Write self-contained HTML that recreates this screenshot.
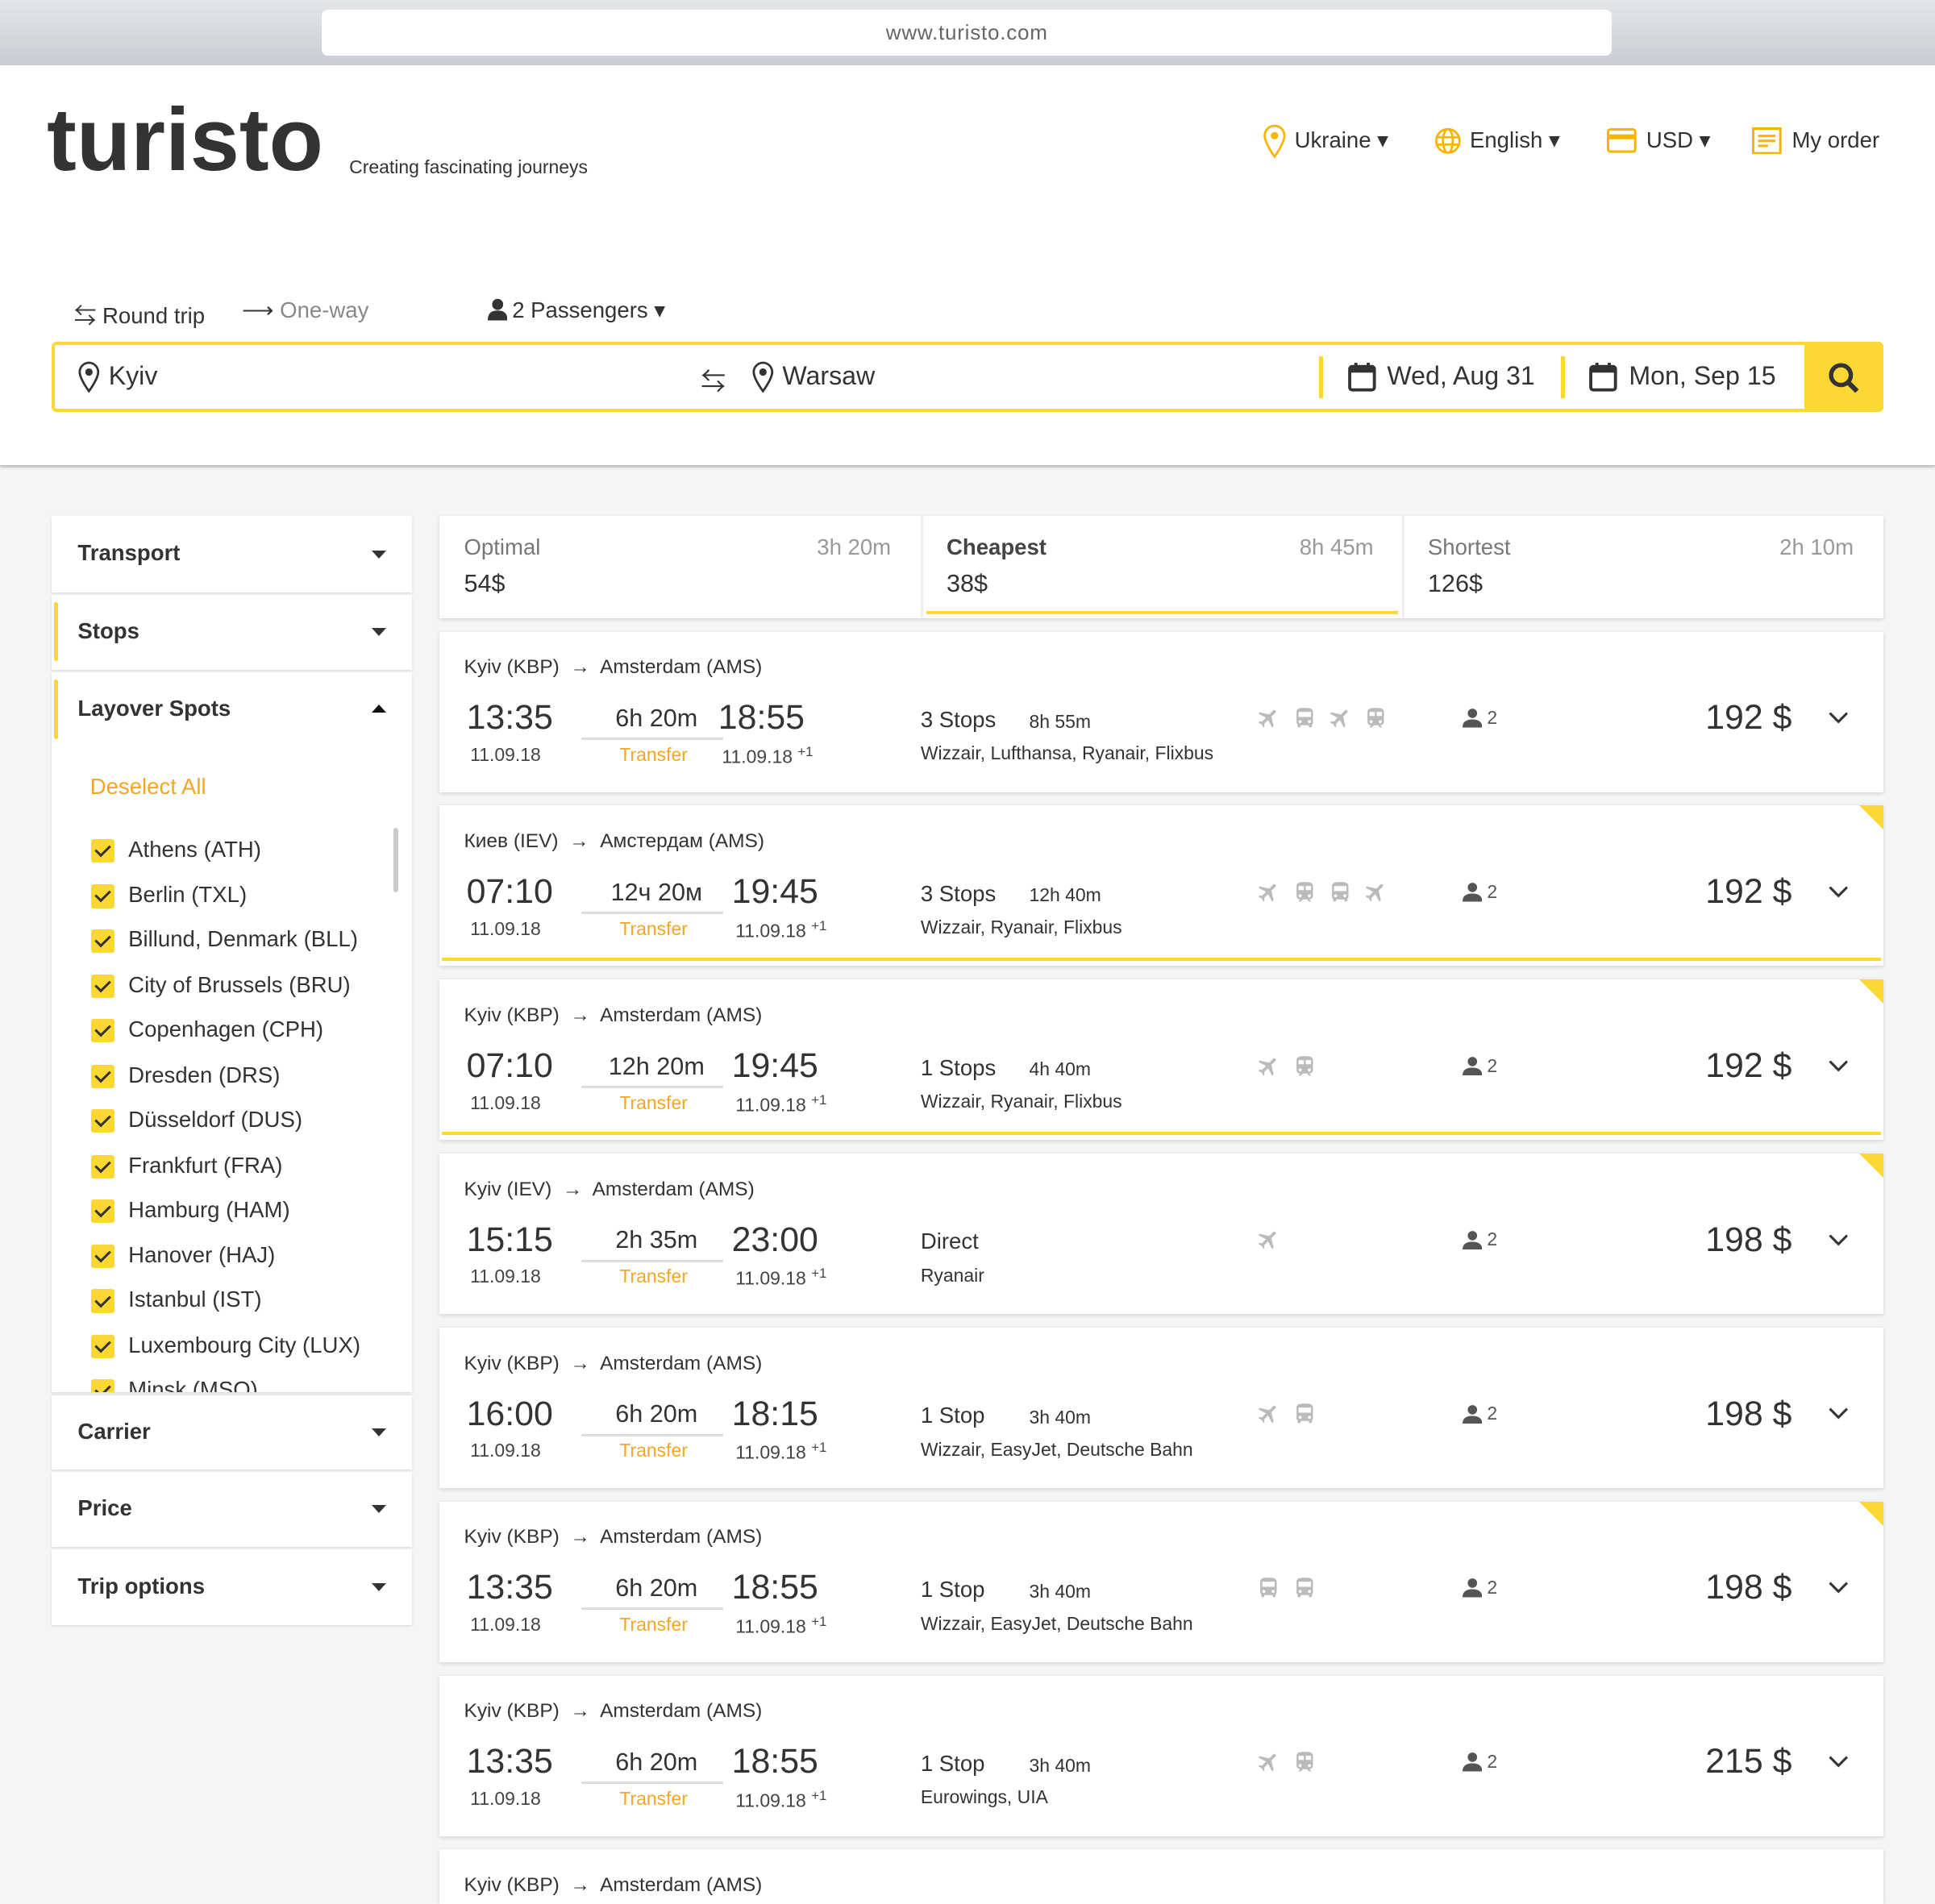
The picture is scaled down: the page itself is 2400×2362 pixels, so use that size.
<!DOCTYPE html>
<html><head><meta charset="utf-8"><style>
*{box-sizing:border-box;margin:0;padding:0}
html,body{width:2400px;height:2362px;overflow:hidden;background:#f4f5f6}
#w{zoom:1.530612;width:1568px;height:1543px;position:relative;overflow:hidden;font-family:"Liberation Sans","Noto Sans CJK SC",sans-serif;color:#333}
.a{position:absolute;white-space:nowrap}
.bar{left:0;top:0;width:1568px;height:53px;background:linear-gradient(#e4e7ea,#c8cdd3)}
.url{left:261px;top:8px;width:1045px;height:37px;background:#fff;border-radius:5px;text-align:center;line-height:37px;font-size:17px;color:#666;letter-spacing:.5px}
.hdr{left:0;top:53px;width:1568px;height:324px;background:#fff;box-shadow:0 2px 2px rgba(0,0,0,.25)}
.nav{font-size:18px;top:103px;color:#333}
.sb{left:42px;top:277px;width:1484px;height:57px;border:3px solid #fdd835;border-radius:4px;background:#fff}
.panel{left:42px;width:292px;background:#fff;box-shadow:0 1px 2px rgba(0,0,0,.12)}
.ph{font-size:18px;font-weight:bold;color:#333;position:absolute;left:21px}
.tri{position:absolute;left:259px;width:0;height:0;border-left:6px solid transparent;border-right:6px solid transparent;border-top:7px solid #333}
.yl{position:absolute;left:2px;width:3px;background:#fdd835;border-radius:2px}
.cb{position:absolute;left:32px;width:19px;height:19px;background:#fdd835;border-radius:2px}
.cb:after{content:"";position:absolute;left:6px;top:2px;width:5px;height:10px;border:solid #333;border-width:0 2px 2px 0;transform:rotate(45deg)}
.ci{position:absolute;left:62px;font-size:18px;color:#333}
.card{left:356px;width:1170px;height:130px;background:#fff;box-shadow:0 1px 3px rgba(0,0,0,.15);overflow:hidden}
.card .a{position:absolute}
.rt{left:20px;top:20px;font-size:16px}
.big{font-size:28px;top:54px}
.dt{font-size:15px;top:91px;color:#444}
.dur{font-size:20px;top:59px;left:130px;width:92px;text-align:center}
.ul{left:115px;top:86px;width:115px;height:2px;background:#ddd}
.tf{font-size:15px;color:#f5a623;top:91px;left:146px}
.st{font-size:18px;top:61px;left:390px}
.sd{font-size:15px;top:64px;left:478px}
.cr{font-size:15px;top:90px;left:390px}
.ic{top:59px;left:662px;display:flex;gap:9px}
.ic svg{width:20px;height:22px;fill:#bbb}
.pp{top:61px;left:829px;font-size:15px;color:#555;display:flex;align-items:center;gap:4px}
.pr{font-size:28px;top:54px;right:74px}
.chev{top:63px;left:1126px}
.hl{left:2px;bottom:4px;width:1166px;height:3px;background:#fdd835}
.cor{right:0;top:0;width:0;height:0;border-left:20px solid transparent;border-top:20px solid #fdd835}
sup{font-size:11px}
</style></head><body>
<svg width="0" height="0" style="position:absolute"><defs>
<symbol id="pl" viewBox="0 0 24 24"><path transform="rotate(45 12 12)" d="M21 16v-2l-8-5V3.5c0-.83-.67-1.5-1.5-1.5S10 2.67 10 3.5V9l-8 5v2l8-2.5V19l-2 1.5V22l3.5-1 3.5 1v-1.5L13 19v-5.5l8 2.5z"/></symbol>
<symbol id="bu" viewBox="0 0 24 24"><path d="M4 16c0 .88.39 1.67 1 2.22V20c0 .55.45 1 1 1h1c.55 0 1-.45 1-1v-1h8v1c0 .55.45 1 1 1h1c.55 0 1-.45 1-1v-1.78c.61-.55 1-1.34 1-2.22V6c0-3.5-3.58-4-8-4s-8 .5-8 4v10zm3.5 1c-.83 0-1.5-.67-1.5-1.5S6.67 14 7.5 14s1.5.67 1.5 1.5S8.33 17 7.5 17zm9 0c-.83 0-1.5-.67-1.5-1.5s.67-1.5 1.5-1.5 1.5.67 1.5 1.5-.67 1.5-1.5 1.5zm1.5-6H6V6h12v5z"/></symbol>
<symbol id="tr" viewBox="0 0 24 24"><path d="M12 2c-4 0-8 .5-8 4v9.5C4 17.43 5.57 19 7.5 19L6 20.5v.5h2.23l2-2H14l2 2h2v-.5L16.5 19c1.930 0 3.5-1.57 3.5-3.5V6c0-3.5-3.58-4-8-4zM7.5 17c-.83 0-1.5-.67-1.5-1.5S6.67 14 7.5 14s1.5.67 1.5 1.5S8.33 17 7.5 17zm3.5-7H6V6h5v4zm2 0V6h5v4h-5zm3.5 7c-.83 0-1.5-.67-1.5-1.5s.67-1.5 1.5-1.5 1.5.67 1.5 1.5-.67 1.5-1.5 1.5z"/></symbol>
<symbol id="ps" viewBox="0 0 16 16"><circle cx="8" cy="4.5" r="3.8" fill="#555"/><path d="M0 16c0-4.5 3-6.5 8-6.5s8 2 8 6.5z" fill="#555"/></symbol>
<symbol id="cv" viewBox="0 0 16 12"><path d="M1 3l7 7 7-7" fill="none" stroke="#333" stroke-width="2"/></symbol>
</defs></svg>
<div id="w">
<div class="a bar"></div><div class="a url">www.turisto.com</div>
<div class="a hdr"></div>
<div class="a" style="left:38px;top:72px;font-size:72px;font-weight:bold;color:#333;letter-spacing:0px">turisto</div>
<div class="a" style="left:283px;top:127px;font-size:15px;color:#333">Creating fascinating journeys</div>
<svg class="a" style="left:1022px;top:100px" width="22" height="30" viewBox="0 0 22 30"><path d="M11 2a8 8 0 0 0-8 8c0 6 8 17 8 17s8-11 8-17a8 8 0 0 0-8-8z" fill="none" stroke="#f7b500" stroke-width="1.8"/><circle cx="11" cy="10" r="3" fill="#f7b500"/></svg>
<div class="a nav" style="left:1049px">Ukraine ▾</div>
<svg class="a" style="left:1162px;top:103px" width="22" height="22" viewBox="0 0 22 22" fill="none" stroke="#f7b500" stroke-width="1.8"><circle cx="11" cy="11" r="9.5"/><ellipse cx="11" cy="11" rx="4" ry="9.5"/><path d="M2 8h18M2 14h18"/></svg>
<div class="a nav" style="left:1191px">English ▾</div>
<svg class="a" style="left:1302px;top:104px" width="24" height="20" viewBox="0 0 24 20"><rect x="1" y="1" width="22" height="18" rx="2" fill="none" stroke="#f7b500" stroke-width="2"/><rect x="1" y="5" width="22" height="4" fill="#f7b500"/></svg>
<div class="a nav" style="left:1334px">USD ▾</div>
<svg class="a" style="left:1420px;top:103px" width="24" height="22" viewBox="0 0 24 22" fill="none" stroke="#f7b500" stroke-width="2"><rect x="1" y="1" width="22" height="20"/><path d="M5 7h14M5 11h14M5 15h8"/></svg>
<div class="a nav" style="left:1452px">My order</div>

<div class="a" style="left:60px;top:241px;font-size:18px;color:#333">⇆ Round trip</div>
<div class="a" style="left:196px;top:241px;font-size:18px;color:#888"><span style="color:#333">⟶</span> One-way</div>
<svg class="a" style="left:395px;top:242px" width="16" height="18" viewBox="0 0 16 18"><circle cx="8" cy="5" r="4.5" fill="#333"/><path d="M0 18c0-6 3-8 8-8s8 2 8 8z" fill="#333"/></svg>
<div class="a" style="left:415px;top:241px;font-size:18px;color:#333">2 Passengers ▾</div>

<div class="a sb"></div>
<svg class="a" style="left:62px;top:292px" width="20" height="27" viewBox="0 0 20 27"><path d="M10 2a7.5 7.5 0 0 0-7.5 7.5C2.5 15 10 25 10 25s7.5-10 7.5-15.5A7.5 7.5 0 0 0 10 2z" fill="none" stroke="#333" stroke-width="1.8"/><circle cx="10" cy="9.5" r="3" fill="#333"/></svg>
<div class="a" style="left:88px;top:293px;font-size:21px">Kyiv</div>
<div class="a" style="left:568px;top:293px;font-size:20px">⇆</div>
<svg class="a" style="left:608px;top:292px" width="20" height="27" viewBox="0 0 20 27"><path d="M10 2a7.5 7.5 0 0 0-7.5 7.5C2.5 15 10 25 10 25s7.5-10 7.5-15.5A7.5 7.5 0 0 0 10 2z" fill="none" stroke="#333" stroke-width="1.8"/><circle cx="10" cy="9.5" r="3" fill="#333"/></svg>
<div class="a" style="left:634px;top:293px;font-size:21px">Warsaw</div>
<div class="a" style="left:1069px;top:289px;width:3px;height:34px;background:#fdd835"></div>
<div class="a" style="left:1265px;top:289px;width:3px;height:34px;background:#fdd835"></div>
<svg class="a" style="left:1092px;top:292px" width="24" height="26" viewBox="0 0 24 26"><rect x="2" y="5" width="20" height="19" rx="2" fill="none" stroke="#333" stroke-width="2.5"/><rect x="2" y="5" width="20" height="5" fill="#333"/><path d="M7 2v5M17 2v5" stroke="#333" stroke-width="2.5"/></svg>
<div class="a" style="left:1124px;top:293px;font-size:21px">Wed, Aug 31</div>
<svg class="a" style="left:1287px;top:292px" width="24" height="26" viewBox="0 0 24 26"><rect x="2" y="5" width="20" height="19" rx="2" fill="none" stroke="#333" stroke-width="2.5"/><rect x="2" y="5" width="20" height="5" fill="#333"/><path d="M7 2v5M17 2v5" stroke="#333" stroke-width="2.5"/></svg>
<div class="a" style="left:1320px;top:293px;font-size:21px">Mon, Sep 15</div>
<div class="a" style="left:1462px;top:277px;width:64px;height:57px;background:#fdd835;border-radius:0 4px 4px 0"></div>
<svg class="a" style="left:1480px;top:292px" width="28" height="28" viewBox="0 0 28 28"><circle cx="12" cy="12" r="8" fill="none" stroke="#333" stroke-width="3.5"/><path d="M18 18l7 7" stroke="#333" stroke-width="4"/></svg>

<div class="a panel" style="top:418px;height:62px"><div class="ph" style="top:20px">Transport</div><div class="tri" style="top:28px"></div></div>
<div class="a panel" style="top:482px;height:61px"><div class="yl" style="top:6px;height:48px"></div><div class="ph" style="top:19px">Stops</div><div class="tri" style="top:27px"></div></div>
<div class="a panel" style="top:545px;height:583px;overflow:hidden"><div class="yl" style="top:6px;height:48px"></div><div class="ph" style="top:19px">Layover Spots</div><div class="tri" style="top:26px;border-top:0;border-bottom:7px solid #111"></div>
<div class="a" style="left:31px;top:82px;font-size:18px;color:#f5a623">Deselect All</div>
<div style="position:absolute;left:277px;top:126px;width:4px;height:52px;background:#ccc;border-radius:2px"></div>
<div class="cb" style="top:135px"></div><div class="ci" style="top:133px">Athens (ATH)</div>
<div class="cb" style="top:172px"></div><div class="ci" style="top:170px">Berlin (TXL)</div>
<div class="cb" style="top:208px"></div><div class="ci" style="top:206px">Billund, Denmark (BLL)</div>
<div class="cb" style="top:245px"></div><div class="ci" style="top:243px">City of Brussels (BRU)</div>
<div class="cb" style="top:281px"></div><div class="ci" style="top:279px">Copenhagen (CPH)</div>
<div class="cb" style="top:318px"></div><div class="ci" style="top:316px">Dresden (DRS)</div>
<div class="cb" style="top:354px"></div><div class="ci" style="top:352px">Düsseldorf (DUS)</div>
<div class="cb" style="top:391px"></div><div class="ci" style="top:389px">Frankfurt (FRA)</div>
<div class="cb" style="top:427px"></div><div class="ci" style="top:425px">Hamburg (HAM)</div>
<div class="cb" style="top:464px"></div><div class="ci" style="top:462px">Hanover (HAJ)</div>
<div class="cb" style="top:500px"></div><div class="ci" style="top:498px">Istanbul (IST)</div>
<div class="cb" style="top:537px"></div><div class="ci" style="top:535px">Luxembourg City (LUX)</div>
<div class="cb" style="top:573px"></div><div class="ci" style="top:571px">Minsk (MSQ)</div>
</div>
<div class="a panel" style="top:1130px;height:61px;border-top:1px solid #e5e5e5"><div class="ph" style="top:19px">Carrier</div><div class="tri" style="top:27px"></div></div>
<div class="a panel" style="top:1193px;height:61px"><div class="ph" style="top:19px">Price</div><div class="tri" style="top:27px"></div></div>
<div class="a panel" style="top:1256px;height:61px"><div class="ph" style="top:19px">Trip options</div><div class="tri" style="top:27px"></div></div>

<div class="a" style="left:356px;top:418px;width:1170px;height:83px;background:#fff;box-shadow:0 1px 3px rgba(0,0,0,.15)"></div>
<div class="a" style="left:746px;top:418px;width:2px;height:83px;background:#eee"></div>
<div class="a" style="left:1136px;top:418px;width:2px;height:83px;background:#eee"></div>
<div class="a" style="left:376px;top:433px;font-size:18px;color:#777">Optimal</div><div class="a" style="left:662px;top:433px;font-size:18px;color:#999">3h 20m</div><div class="a" style="left:376px;top:462px;font-size:20px">54$</div>
<div class="a" style="left:767px;top:433px;font-size:18px;font-weight:bold;color:#444">Cheapest</div><div class="a" style="left:1053px;top:433px;font-size:18px;color:#999">8h 45m</div><div class="a" style="left:767px;top:462px;font-size:20px">38$</div>
<div class="a" style="left:751px;top:495px;width:382px;height:3px;background:#fdd835"></div>
<div class="a" style="left:1157px;top:433px;font-size:18px;color:#777">Shortest</div><div class="a" style="left:1442px;top:433px;font-size:18px;color:#999">2h 10m</div><div class="a" style="left:1157px;top:462px;font-size:20px">126$</div>

<div class="a card" style="top:512px"><div class="a rt">Kyiv (KBP) &nbsp;→&nbsp; Amsterdam (AMS)</div><div class="a big" style="left:22px">13:35</div><div class="a dt" style="left:25px">11.09.18</div><div class="a dur">6h 20m</div><div class="a ul"></div><div class="a tf">Transfer</div><div class="a big" style="left:226px">18:55</div><div class="a dt" style="left:229px">11.09.18 <sup>+1</sup></div><div class="a st">3 Stops</div><div class="a sd">8h 55m</div><div class="a cr">Wizzair, Lufthansa, Ryanair, Flixbus</div><div class="a ic"><svg><use href="#pl"/></svg><svg><use href="#bu"/></svg><svg><use href="#pl"/></svg><svg><use href="#tr"/></svg></div><div class="a pp"><svg width="16" height="16"><use href="#ps"/></svg>2</div><div class="a pr">192 $</div><svg class="a chev" width="16" height="12"><use href="#cv"/></svg></div>

<div class="a card" style="top:653px"><div class="a cor"></div><div class="a rt">Киев (IEV) &nbsp;→&nbsp; Амстердам (AMS)</div><div class="a big" style="left:22px">07:10</div><div class="a dt" style="left:25px">11.09.18</div><div class="a dur">12ч 20м</div><div class="a ul"></div><div class="a tf">Transfer</div><div class="a big" style="left:237px">19:45</div><div class="a dt" style="left:240px">11.09.18 <sup>+1</sup></div><div class="a st">3 Stops</div><div class="a sd">12h 40m</div><div class="a cr">Wizzair, Ryanair, Flixbus</div><div class="a ic"><svg><use href="#pl"/></svg><svg><use href="#tr"/></svg><svg><use href="#bu"/></svg><svg><use href="#pl"/></svg></div><div class="a pp"><svg width="16" height="16"><use href="#ps"/></svg>2</div><div class="a pr">192 $</div><svg class="a chev" width="16" height="12"><use href="#cv"/></svg><div class="a hl"></div></div>

<div class="a card" style="top:794px"><div class="a cor"></div><div class="a rt">Kyiv (KBP) &nbsp;→&nbsp; Amsterdam (AMS)</div><div class="a big" style="left:22px">07:10</div><div class="a dt" style="left:25px">11.09.18</div><div class="a dur">12h 20m</div><div class="a ul"></div><div class="a tf">Transfer</div><div class="a big" style="left:237px">19:45</div><div class="a dt" style="left:240px">11.09.18 <sup>+1</sup></div><div class="a st">1 Stops</div><div class="a sd">4h 40m</div><div class="a cr">Wizzair, Ryanair, Flixbus</div><div class="a ic"><svg><use href="#pl"/></svg><svg><use href="#tr"/></svg></div><div class="a pp"><svg width="16" height="16"><use href="#ps"/></svg>2</div><div class="a pr">192 $</div><svg class="a chev" width="16" height="12"><use href="#cv"/></svg><div class="a hl"></div></div>

<div class="a card" style="top:935px"><div class="a cor"></div><div class="a rt">Kyiv (IEV) &nbsp;→&nbsp; Amsterdam (AMS)</div><div class="a big" style="left:22px">15:15</div><div class="a dt" style="left:25px">11.09.18</div><div class="a dur">2h 35m</div><div class="a ul"></div><div class="a tf">Transfer</div><div class="a big" style="left:237px">23:00</div><div class="a dt" style="left:240px">11.09.18 <sup>+1</sup></div><div class="a st">Direct</div><div class="a cr">Ryanair</div><div class="a ic"><svg><use href="#pl"/></svg></div><div class="a pp"><svg width="16" height="16"><use href="#ps"/></svg>2</div><div class="a pr">198 $</div><svg class="a chev" width="16" height="12"><use href="#cv"/></svg></div>

<div class="a card" style="top:1076px"><div class="a rt">Kyiv (KBP) &nbsp;→&nbsp; Amsterdam (AMS)</div><div class="a big" style="left:22px">16:00</div><div class="a dt" style="left:25px">11.09.18</div><div class="a dur">6h 20m</div><div class="a ul"></div><div class="a tf">Transfer</div><div class="a big" style="left:237px">18:15</div><div class="a dt" style="left:240px">11.09.18 <sup>+1</sup></div><div class="a st">1 Stop</div><div class="a sd">3h 40m</div><div class="a cr">Wizzair, EasyJet, Deutsche Bahn</div><div class="a ic"><svg><use href="#pl"/></svg><svg><use href="#bu"/></svg></div><div class="a pp"><svg width="16" height="16"><use href="#ps"/></svg>2</div><div class="a pr">198 $</div><svg class="a chev" width="16" height="12"><use href="#cv"/></svg></div>

<div class="a card" style="top:1217px"><div class="a cor"></div><div class="a rt">Kyiv (KBP) &nbsp;→&nbsp; Amsterdam (AMS)</div><div class="a big" style="left:22px">13:35</div><div class="a dt" style="left:25px">11.09.18</div><div class="a dur">6h 20m</div><div class="a ul"></div><div class="a tf">Transfer</div><div class="a big" style="left:237px">18:55</div><div class="a dt" style="left:240px">11.09.18 <sup>+1</sup></div><div class="a st">1 Stop</div><div class="a sd">3h 40m</div><div class="a cr">Wizzair, EasyJet, Deutsche Bahn</div><div class="a ic"><svg><use href="#bu"/></svg><svg><use href="#bu"/></svg></div><div class="a pp"><svg width="16" height="16"><use href="#ps"/></svg>2</div><div class="a pr">198 $</div><svg class="a chev" width="16" height="12"><use href="#cv"/></svg></div>

<div class="a card" style="top:1358px"><div class="a rt">Kyiv (KBP) &nbsp;→&nbsp; Amsterdam (AMS)</div><div class="a big" style="left:22px">13:35</div><div class="a dt" style="left:25px">11.09.18</div><div class="a dur">6h 20m</div><div class="a ul"></div><div class="a tf">Transfer</div><div class="a big" style="left:237px">18:55</div><div class="a dt" style="left:240px">11.09.18 <sup>+1</sup></div><div class="a st">1 Stop</div><div class="a sd">3h 40m</div><div class="a cr">Eurowings, UIA</div><div class="a ic"><svg><use href="#pl"/></svg><svg><use href="#tr"/></svg></div><div class="a pp"><svg width="16" height="16"><use href="#ps"/></svg>2</div><div class="a pr">215 $</div><svg class="a chev" width="16" height="12"><use href="#cv"/></svg></div>

<div class="a card" style="top:1499px;height:44px"><div class="a rt">Kyiv (KBP) &nbsp;→&nbsp; Amsterdam (AMS)</div></div>
</div></body></html>
